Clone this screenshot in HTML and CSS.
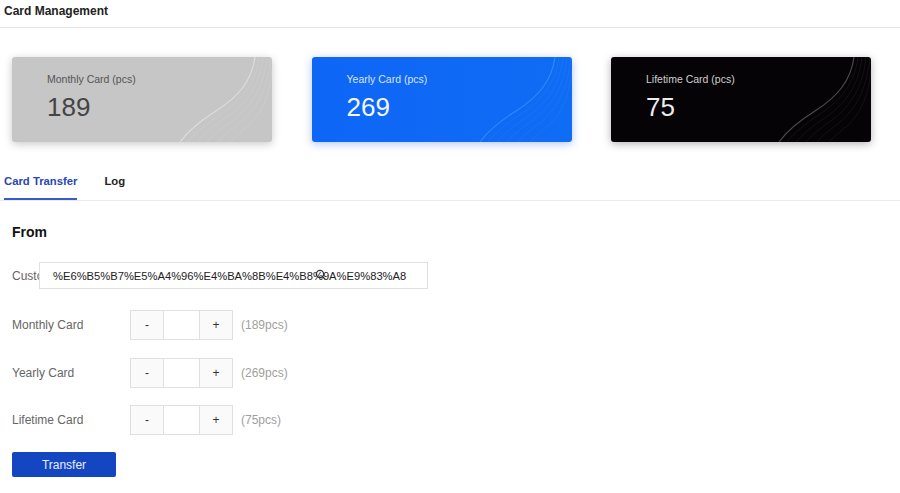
FILE: index.html
```html
<!DOCTYPE html>
<html lang="en">
  <head>
    <meta charset="UTF-8" />
    <meta name="viewport" content="width=device-width, initial-scale=1.0" />
    <title>Card Management</title>
    <link rel="stylesheet" href="styles.css">
  </head>

  <body>
    <div class="topbar">Card Management</div>

    <div class="cards">
      <div class="stat-card gray">
        <svg class="waves" viewBox="0 0 260 85" preserveAspectRatio="none">
          <path class="lead" d="M243 0 C240 24 226 40 204 54 C188 64 176 74 168 85" />
          <path d="M247 0 C244 26 230 43 209 57 C194 67 183 76 176 85" />
          <path d="M251 0 C248 28 235 46 215 60 C200 70 191 78 185 85" />
          <path d="M255 0 C252 30 240 49 221 63 C208 72 200 79 195 85" />
          <path d="M259 0 C256 32 245 52 228 66 C217 74 210 80 206 85" />
          <path d="M260 12 C258 38 250 56 236 69 C227 76 222 81 218 85" />
        </svg>
        <div class="stat-label">Monthly Card (pcs)</div>
        <div class="stat-num">189</div>
      </div>
      <div class="stat-card blue">
        <svg class="waves" viewBox="0 0 260 85" preserveAspectRatio="none">
          <path class="lead" d="M243 0 C240 24 226 40 204 54 C188 64 176 74 168 85" />
          <path d="M247 0 C244 26 230 43 209 57 C194 67 183 76 176 85" />
          <path d="M251 0 C248 28 235 46 215 60 C200 70 191 78 185 85" />
          <path d="M255 0 C252 30 240 49 221 63 C208 72 200 79 195 85" />
          <path d="M259 0 C256 32 245 52 228 66 C217 74 210 80 206 85" />
          <path d="M260 12 C258 38 250 56 236 69 C227 76 222 81 218 85" />
        </svg>
        <div class="stat-label">Yearly Card (pcs)</div>
        <div class="stat-num">269</div>
      </div>
      <div class="stat-card black">
        <svg class="waves" viewBox="0 0 260 85" preserveAspectRatio="none">
          <path class="lead" d="M243 0 C240 24 226 40 204 54 C188 64 176 74 168 85" />
          <path d="M247 0 C244 26 230 43 209 57 C194 67 183 76 176 85" />
          <path d="M251 0 C248 28 235 46 215 60 C200 70 191 78 185 85" />
          <path d="M255 0 C252 30 240 49 221 63 C208 72 200 79 195 85" />
          <path d="M259 0 C256 32 245 52 228 66 C217 74 210 80 206 85" />
          <path d="M260 12 C258 38 250 56 236 69 C227 76 222 81 218 85" />
        </svg>
        <div class="stat-label">Lifetime Card (pcs)</div>
        <div class="stat-num">75</div>
      </div>
    </div>

    <div class="tabs">
      <div class="tab active">Card Transfer</div>
      <div class="tab">Log</div>
    </div>

    <div class="form">
      <h2 class="form-title">From</h2>

      <div class="customer-row">
        <div class="customer-label">Customer</div>
        <div class="customer-box">
          <input class="customer-input" type="text" value="%E6%B5%B7%E5%A4%96%E4%BA%8B%E4%B8%9A%E9%83%A8" />
          <svg class="search-icon" viewBox="0 0 12 12">
            <circle cx="5" cy="5" r="3.6" />
            <path d="M7.6 7.6 L10 10" />
          </svg>
        </div>
      </div>

      <div class="row">
        <div class="row-label">Monthly Card</div>
        <div class="stepper">
          <button class="step-btn">-</button>
          <input class="step-input" type="text" />
          <button class="step-btn">+</button>
        </div>
        <span class="stock">(189pcs)</span>
      </div>

      <div class="row">
        <div class="row-label">Yearly Card</div>
        <div class="stepper">
          <button class="step-btn">-</button>
          <input class="step-input" type="text" />
          <button class="step-btn">+</button>
        </div>
        <span class="stock">(269pcs)</span>
      </div>

      <div class="row last">
        <div class="row-label">Lifetime Card</div>
        <div class="stepper">
          <button class="step-btn">-</button>
          <input class="step-input" type="text" />
          <button class="step-btn">+</button>
        </div>
        <span class="stock">(75pcs)</span>
      </div>

      <button class="transfer-btn">Transfer</button>
    </div>
  </body>
</html>
```

FILE: styles.css
```css
body {
  margin: 0;
  padding: 0;
  background-color: #fff;
  color: #222;
  font-family: "Liberation Sans", Arial, sans-serif;
  font-size: 12px;
}

.topbar {
  height: 25px;
  padding: 2px 4px 0;
  line-height: 18px;
  font-size: 12px;
  font-weight: bold;
  color: #222;
  border-bottom: 1px solid #e6e6e6;
}

.cards {
  display: flex;
  gap: 39.5px;
  padding: 29px 12px 0;
}

.stat-card {
  position: relative;
  overflow: hidden;
  width: 260px;
  height: 85px;
  box-sizing: border-box;
  padding: 15px 0 0 35px;
  border-radius: 3px;
}

.stat-card.gray {
  background-color: #c6c6c6;
  box-shadow: 0 2px 8px rgba(0, 0, 0, 0.22);
}

.stat-card.blue {
  background: linear-gradient(90deg, #0e66f6 0%, #0f6cf4 100%);
  box-shadow: 0 2px 9px rgba(40, 90, 230, 0.35);
}

.stat-card.black {
  background-color: #060307;
  box-shadow: 0 2px 8px rgba(0, 0, 0, 0.3);
}

.waves {
  position: absolute;
  top: 0;
  left: 0;
  width: 100%;
  height: 100%;
  fill: none;
  stroke-width: 0.7;
}

.gray .waves { stroke: rgba(255, 255, 255, 0.16); }
.blue .waves { stroke: rgba(110, 190, 255, 0.16); }
.black .waves { stroke: rgba(255, 255, 255, 0.09); }

.waves .lead {
  stroke-width: 1.2;
}

.gray .waves .lead { stroke: rgba(255, 255, 255, 0.4); }
.blue .waves .lead { stroke: rgba(110, 190, 255, 0.35); }
.black .waves .lead { stroke: rgba(255, 255, 255, 0.28); }

.stat-label {
  position: relative;
  font-size: 10.5px;
  line-height: 14px;
}

.stat-num {
  position: relative;
  margin-top: 6px;
  font-size: 26px;
  line-height: 30px;
}

.gray .stat-label { color: #555; }
.gray .stat-num { color: #444; }
.blue .stat-label { color: #d8e6ff; }
.blue .stat-num { color: #f4f8ff; }
.black .stat-label { color: #cfcfcf; }
.black .stat-num { color: #ececec; }

.tabs {
  display: flex;
  gap: 27px;
  margin-top: 24px;
  padding-left: 4px;
  border-bottom: 1px solid #ececec;
}

.tab {
  padding: 7px 0 9px;
  line-height: 16px;
  font-size: 11.3px;
  font-weight: bold;
  color: #222;
  border-bottom: 2px solid transparent;
}

.tab.active {
  color: #2847b4;
  border-bottom-color: #3a5bc7;
}

.form {
  padding-left: 12px;
}

.form-title {
  margin: 22px 0 0;
  font-size: 14px;
  line-height: 18px;
  font-weight: bold;
  color: #111;
}

.customer-row {
  display: flex;
  margin-top: 21px;
  height: 27px;
  align-items: center;
}

.customer-label {
  width: 27px;
  white-space: nowrap;
  color: #666;
  font-size: 12px;
}

.customer-box {
  position: relative;
}

.customer-input {
  display: block;
  width: 389px;
  height: 27px;
  box-sizing: border-box;
  margin: 0;
  padding: 0 0 0 13px;
  border: 1px solid #e0e0e0;
  background: #fff;
  font-family: "Liberation Sans", Arial, sans-serif;
  font-size: 11.2px;
  color: #222;
  outline: none;
}

.search-icon {
  position: absolute;
  left: 276px;
  top: 7px;
  width: 12px;
  height: 12px;
  fill: none;
  stroke: #333;
  stroke-width: 1.3;
}

.row {
  display: flex;
  align-items: center;
  height: 30px;
  margin-top: 18px;
}

.customer-row + .row {
  margin-top: 21px;
}

.row.last {
  margin-top: 17px;
}

.row-label {
  width: 118px;
  color: #666;
  font-size: 12px;
}

.stepper {
  display: flex;
  height: 30px;
}

.step-btn {
  width: 34px;
  height: 30px;
  margin: 0;
  padding: 0;
  border: 1px solid #e0e0e0;
  background: #fafafa;
  color: #333;
  font-family: "Liberation Sans", Arial, sans-serif;
  font-size: 12px;
}

.step-input {
  width: 35px;
  height: 30px;
  box-sizing: border-box;
  margin: 0;
  border: 1px solid #e0e0e0;
  border-left: none;
  border-right: none;
  background: #fff;
}

.stock {
  margin-left: 8px;
  color: #a0a0a0;
  font-size: 12px;
}

.transfer-btn {
  display: block;
  width: 104px;
  height: 25px;
  margin-top: 17px;
  padding: 0;
  border: none;
  border-radius: 2px;
  background-color: #1446c1;
  color: #e8eeff;
  font-family: "Liberation Sans", Arial, sans-serif;
  font-size: 12px;
}
```
